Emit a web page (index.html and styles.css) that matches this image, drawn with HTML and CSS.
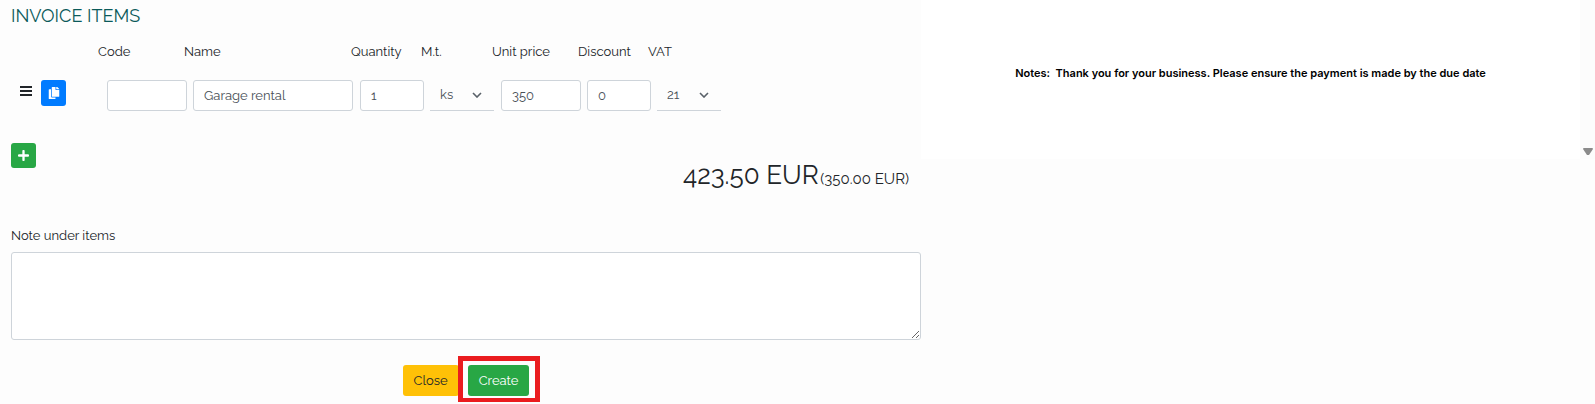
FILE: index.html
```html
<!DOCTYPE html>
<html lang="en">
<head>
<meta charset="utf-8">
<title>Invoice items</title>
<link rel="stylesheet" href="styles.css">
</head>
<body>
<div class="page">
  <main class="editor">
    <h1 class="title">INVOICE ITEMS</h1>
    <div class="columns head">
      <label for="code">Code</label>
      <label for="name">Name</label>
      <label for="qty">Quantity</label>
      <label for="unit">M.t.</label>
      <label for="price">Unit price</label>
      <label for="discount">Discount</label>
      <label for="vat">VAT</label>
    </div>
    <div class="item">
      <div class="tools">
        <svg class="grip" viewBox="0 0 12 10" aria-hidden="true"><path d="M0 0h12v2H0zM0 4h12v2H0zM0 8h12v2H0z"/></svg>
        <button class="square copy" type="button" aria-label="Duplicate item">
          <svg width="12" height="12" viewBox="0 0 512 512" aria-hidden="true"><path fill="currentColor" d="M320 448v40c0 13-11 24-24 24H56c-13 0-24-11-24-24V120c0-13 11-24 24-24h72v296c0 31 25 56 56 56zm0-344V0H184c-13 0-24 11-24 24v368c0 13 11 24 24 24h272c13 0 24-11 24-24V128H344c-13 0-24-11-24-24zm153-31L407 7c-4-4-11-7-17-7h-38v96h128V90c0-6-2-12-7-17z"/></svg>
        </button>
      </div>
      <div class="columns fields">
        <input class="field" id="code" type="text">
        <input class="field" id="name" type="text" value="Garage rental">
        <input class="field" id="qty" type="text" value="1">
        <select class="field pick" id="unit"><option>ks</option></select>
        <input class="field" id="price" type="text" value="350">
        <input class="field" id="discount" type="text" value="0">
        <select class="field pick" id="vat"><option>21</option></select>
      </div>
    </div>
    <button class="square add" type="button" aria-label="Add item">
      <svg width="11" height="11" viewBox="0 0 11 11" aria-hidden="true"><path d="M5.500 1v9M1 5.500h9" fill="none" stroke="currentColor" stroke-width="2.300" stroke-linecap="round"/></svg>
    </button>
    <p class="total">423.50 EUR <small>(350.00 EUR)</small></p>
    <label class="note-label" for="note">Note under items</label>
    <textarea class="note" id="note"></textarea>
    <div class="actions">
      <button class="btn close" type="button">Close</button>
      <span class="marked"><button class="btn create" type="button">Create</button></span>
    </div>
  </main>
  <aside class="preview">
    <p class="notes">Notes:&nbsp; Thank you for your business. Please ensure the payment is made by the due date</p>
    <div class="scroll"><svg width="10" height="8" viewBox="0 0 10 8" aria-hidden="true"><path fill="#8b8b8b" d="M1 0h8q1 0 1 1L6 7H4L0 1q0-1 1-1z"/></svg></div>
  </aside>
</div>
</body>
</html>
```
FILE: styles.css
```css
* { box-sizing: border-box; }
body {
  margin: 0;
  background: #fdfdfd;
  color: #212529;
  font: 13px/20px Raleway, Lato, sans-serif;
}
button, input, select, textarea { font: inherit; }
.page { display: grid; grid-template-columns: 921fr 674fr; align-items: start; }
.editor { padding: 4px 0 0 11px; display: flex; flex-direction: column; }
.title { margin: 0; font-size: 18px; line-height: 24px; font-weight: 400; color: #0b5a5a; }
.columns { display: grid; grid-template-columns: 86px 167px 70px 71px 86px 70px 64px; }
.head { padding: 14px 0 0 87px; }
.item { display: flex; padding-top: 18px; }
.tools { width: 96px; padding-left: 9px; display: flex; align-items: flex-start; gap: 9px; }
.grip { width: 12px; height: 10px; margin-top: 6px; fill: #212529; }
.square {
  width: 25px; height: 25px; padding: 0; border: 0; border-radius: 3px; color: #fff;
  display: flex; align-items: center; justify-content: center;
}
.copy { height: 26px; background: #007bff; }
.add { background: #28a745; margin-top: 32px; }
.field {
  height: 31px; padding: 0 10px; margin-right: 6px; min-width: 0;
  border: 1px solid #ced4da; border-radius: 3px; background: #fff; color: #495057;
}
.fields .field:nth-child(2) { margin-right: 7px; }
.fields .pick {
  appearance: none; border-width: 0 0 1px; border-radius: 0; padding-bottom: 1px; margin-right: 7px;
  background: transparent url("data:image/svg+xml,%3Csvg xmlns='http://www.w3.org/2000/svg' width='10' height='6'%3E%3Cpath d='M1 1l4 4 4-4' fill='none' stroke='%23596169' stroke-width='1.600'/%3E%3C/svg%3E") no-repeat right 12px center;
}
.fields .pick:last-child { margin-right: 0; }
.total { margin: -9px 0 1px; padding-right: 12px; font-size: 26px; line-height: 32px; text-align: right; }
.total small { font-size: 15px; margin-left: -5px; }
.note-label { margin-top: 30px; }
.note { height: 88px; margin-top: 6px; padding: 6px 10px; border: 1px solid #ced4da; border-radius: 3px; background: #fff; }
.actions { display: flex; justify-content: center; gap: 9px; padding: 25px 0 6px; }
.btn { height: 31px; padding: 0 11px; border: 0; border-radius: 3px; }
.close { background: #ffc107; color: #212529; }
.create { background: #28a745; color: #fff; }
.marked { position: relative; }
.marked::after { content: ""; position: absolute; inset: -9px -11px -7px -10px; border: 5px solid #ea1c1f; pointer-events: none; }
.preview { display: flex; justify-content: space-between; height: 159px; background: #fff; }
.notes { margin: 63px auto 0; font: 600 11px/20px Inter, sans-serif; color: #000; }
.scroll { width: 15px; padding-bottom: 3px; background: #fcfcfc; display: flex; align-items: flex-end; justify-content: center; }
```
